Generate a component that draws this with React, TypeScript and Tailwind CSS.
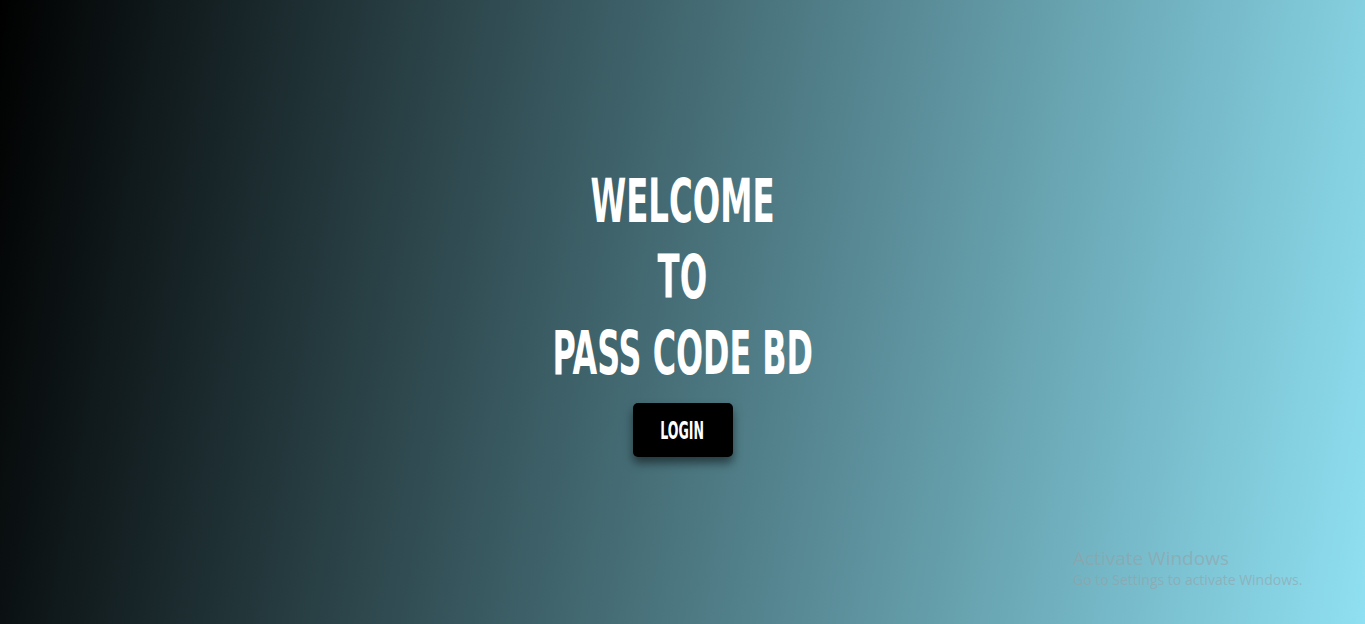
import React from "react";

export default function App() {
  return (
    <div className="relative h-[624px] w-full overflow-hidden bg-[linear-gradient(100deg,#000000_0%,#8fe0f2_100%)]">
      <div className="flex h-full flex-col items-center pt-[163px]">
        <h1 className="flex flex-col items-center font-['DejaVu_Sans_Condensed','DejaVu_Sans',sans-serif] text-[60px] font-bold leading-[76px] text-white">
          <span className="inline-block scale-x-[0.6]">WELCOME</span>
          <span className="inline-block scale-x-[0.6]">TO</span>
          <span className="inline-block scale-x-[0.59] whitespace-nowrap">PASS CODE BD</span>
        </h1>
        <button className="mt-[12px] flex h-[54px] w-[100px] items-center justify-center rounded-[5px] bg-black shadow-[0_6px_10px_rgba(0,0,0,0.5)]">
          <span className="inline-block scale-x-[0.56] font-['DejaVu_Sans_Condensed','DejaVu_Sans',sans-serif] text-[25px] font-bold leading-none text-white">
            LOGIN
          </span>
        </button>
      </div>
      <div className="absolute left-[1073px] top-[546px] font-['Open_Sans',sans-serif] text-[rgba(150,160,165,0.6)]">
        <div className="text-[19px] leading-[24px]">Activate Windows</div>
        <div className="text-[14px] leading-[20px]">Go to Settings to activate Windows.</div>
      </div>
    </div>
  );
}
